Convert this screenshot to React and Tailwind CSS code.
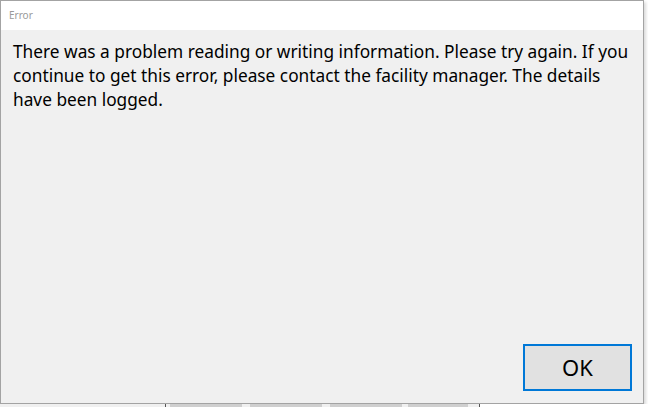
export default function App() {
  return (
    <div
      className="w-[648px] h-[407px] bg-white relative overflow-hidden"
      style={{ fontFamily: '"Noto Sans", "Liberation Sans", sans-serif' }}
    >
      {/* Dialog window */}
      <div className="w-[644px] h-[404px] border border-[#a3a3a3] bg-[#f0f0f0] flex flex-col shadow-[2px_2px_3px_rgba(0,0,0,0.15)]">
        {/* Title bar */}
        <div className="h-[29px] bg-white flex items-center pl-[8px]">
          <span className="text-[10px] text-[#9a9a9a]">Error</span>
        </div>

        {/* Message */}
        <div className="flex-1 px-[12px] pt-[10px]">
          <p className="text-[17.3px] leading-[24px] text-black">
            There was a problem reading or writing information. Please try again. If you
            <br />
            continue to get this error, please contact the facility manager. The details
            <br />
            have been logged.
          </p>
        </div>

        {/* Buttons */}
        <div className="flex justify-end pr-[11px] pb-[12px]">
          <button className="w-[109px] h-[47px] bg-[#e1e1e1] border-2 border-[#0078d7] text-[22px] text-black">
            OK
          </button>
        </div>
      </div>

      {/* Background app peeking below */}
      <div className="absolute left-0 top-[404px] w-[648px] h-[3px] flex">
        <div className="w-[165px] bg-[#f0f0f0]" />
        <div className="w-[1px] bg-[#555]" />
        <div className="w-[4px] bg-[#f0f0f0]" />
        <div className="w-[72px] bg-[#cfcfcf]" />
        <div className="w-[8px] bg-[#f0f0f0]" />
        <div className="w-[72px] bg-[#cfcfcf]" />
        <div className="w-[8px] bg-[#f0f0f0]" />
        <div className="w-[72px] bg-[#cfcfcf]" />
        <div className="w-[6px] bg-[#f0f0f0]" />
        <div className="w-[60px] bg-[#cfcfcf]" />
        <div className="w-[11px] bg-[#f0f0f0]" />
        <div className="w-[1px] bg-[#555]" />
        <div className="flex-1 bg-white" />
      </div>
    </div>
  );
}
